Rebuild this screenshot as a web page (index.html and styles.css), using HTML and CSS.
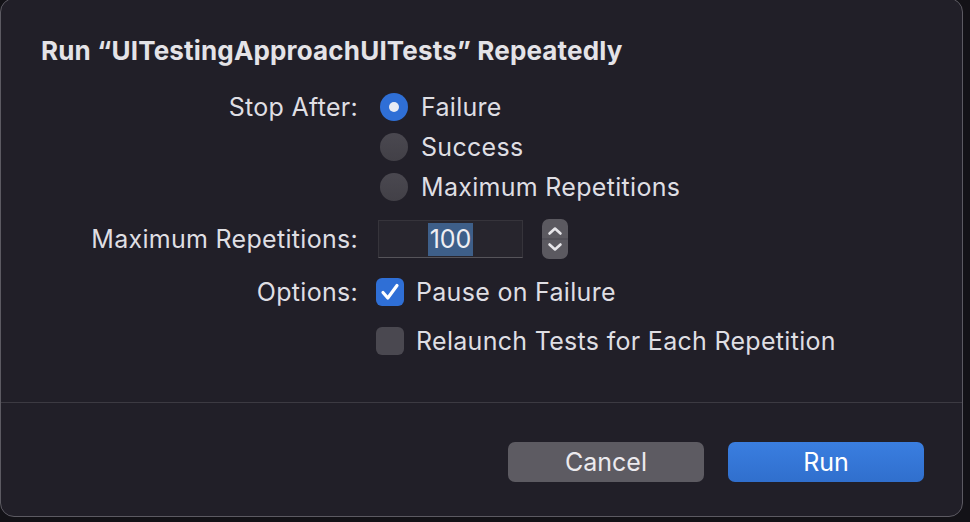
FILE: index.html
```html
<!DOCTYPE html>
<html lang="en">
<head>
<meta charset="utf-8">
<title>Run Repeatedly</title>
<link rel="stylesheet" href="styles.css">
</head>
<body>
<div class="dialog">
  <h1 class="title">Run “UITestingApproachUITests” Repeatedly</h1>
  <div class="form">
    <div class="label">Stop After:</div>
    <div class="control"><span class="radio on"></span><span>Failure</span></div>
    <div class="label"></div>
    <div class="control"><span class="radio"></span><span>Success</span></div>
    <div class="label"></div>
    <div class="control"><span class="radio"></span><span>Maximum Repetitions</span></div>

    <div class="label">Maximum Repetitions:</div>
    <div class="control">
      <div class="field"><span class="sel">100</span></div>
      <div class="stepper">
        <svg width="26" height="40" viewBox="0 0 26 40">
          <path d="M7.5 14.5 L13 9.5 L18.5 14.5" fill="none" stroke="#e6e5e9" stroke-width="2.6" stroke-linecap="round" stroke-linejoin="round"/>
          <line x1="0" y1="20" x2="26" y2="20" stroke="#4a4850" stroke-width="1"/>
          <path d="M7.5 25.5 L13 30.5 L18.5 25.5" fill="none" stroke="#e6e5e9" stroke-width="2.6" stroke-linecap="round" stroke-linejoin="round"/>
        </svg>
      </div>
    </div>

    <div class="label">Options:</div>
    <div class="control check-row">
      <span class="check on">
        <svg width="28" height="28" viewBox="0 0 28 28"><path d="M7 14.5 L11.8 20 L21 7.5" fill="none" stroke="#ffffff" stroke-width="3.2" stroke-linecap="round" stroke-linejoin="round"/></svg>
      </span>
      <span>Pause on Failure</span>
    </div>
    <div class="label"></div>
    <div class="control check-row"><span class="check"></span><span>Relaunch Tests for Each Repetition</span></div>
  </div>
  <div class="separator"></div>
  <div class="buttons">
    <button class="btn cancel">Cancel</button>
    <button class="btn run">Run</button>
  </div>
</div>
</body>
</html>
```

FILE: styles.css
```css
html, body {
  margin: 0;
  padding: 0;
  background: #131217;
  width: 970px;
  height: 522px;
  overflow: hidden;
  font-family: Inter, "Noto Sans", "Liberation Sans", sans-serif;
  color: #dfdee3;
}

.dialog {
  box-sizing: border-box;
  width: 963px;
  height: 519px;
  margin-top: -2px;
  background: #211f28;
  border: 1px solid #5c5a62;
  border-radius: 14px;
  padding-top: 37px;
}

.title {
  margin: 0 0 0 40px;
  font-size: 26px;
  line-height: 30px;
  font-weight: 700;
  color: #e4e3e7;
  letter-spacing: 0.17px;
}

.form {
  display: grid;
  grid-template-columns: 357px auto;
  grid-template-rows: 40px 40px 40px 64px 41px 57px;
  column-gap: 18px;
  margin-top: 21px;
  font-size: 25px;
  letter-spacing: 0.3px;
}

.label {
  display: flex;
  align-items: center;
  justify-content: flex-end;
}

.control {
  display: flex;
  align-items: center;
  gap: 13px;
}
.check-row { gap: 12px; }

.radio {
  box-sizing: border-box;
  width: 28px;
  height: 28px;
  border-radius: 50%;
  margin-left: 4px;
  background: linear-gradient(#4a4850, #424047);
  position: relative;
  flex: none;
}
.radio.on {
  background: #2f6fd6;
}
.radio.on::after {
  content: "";
  position: absolute;
  left: 9px;
  top: 9px;
  width: 10px;
  height: 10px;
  border-radius: 50%;
  background: #e8ecf5;
}

.field {
  box-sizing: border-box;
  width: 145px;
  height: 38px;
  margin-left: 2px;
  background: #27252d;
  border: 1px solid #36343b;
  border-bottom-color: #56545a;
  display: flex;
  align-items: center;
  justify-content: center;
  font-size: 25px;
  letter-spacing: 0;
  color: #f0eff2;
}
.sel {
  background: #3e5f89;
  padding: 0 2px;
  line-height: 33px;
}

.stepper {
  width: 26px;
  height: 40px;
  border-radius: 7px;
  background: #5b5960;
  margin-left: 6px;
  overflow: hidden;
}
.stepper svg { display: block; }

.check {
  box-sizing: border-box;
  width: 28px;
  height: 28px;
  border-radius: 6px;
  background: #4a4850;
  flex: none;
}
.check.on {
  background: #2f6fd6;
}
.check svg { display: block; }

.separator {
  height: 1px;
  background: #3c3a42;
  margin-top: 33px;
}

.buttons {
  display: flex;
  justify-content: flex-end;
  gap: 24px;
  padding-right: 38px;
  margin-top: 39px;
}

.btn {
  width: 196px;
  height: 40px;
  border: none;
  border-radius: 7px;
  font-family: Inter, "Noto Sans", "Liberation Sans", sans-serif;
  font-size: 25px;
  color: #eceaee;
  padding: 0;
}
.cancel { background: #5d5b62; }
.run { background: linear-gradient(#3a7ee0, #306fcd); color: #ffffff; }
```
